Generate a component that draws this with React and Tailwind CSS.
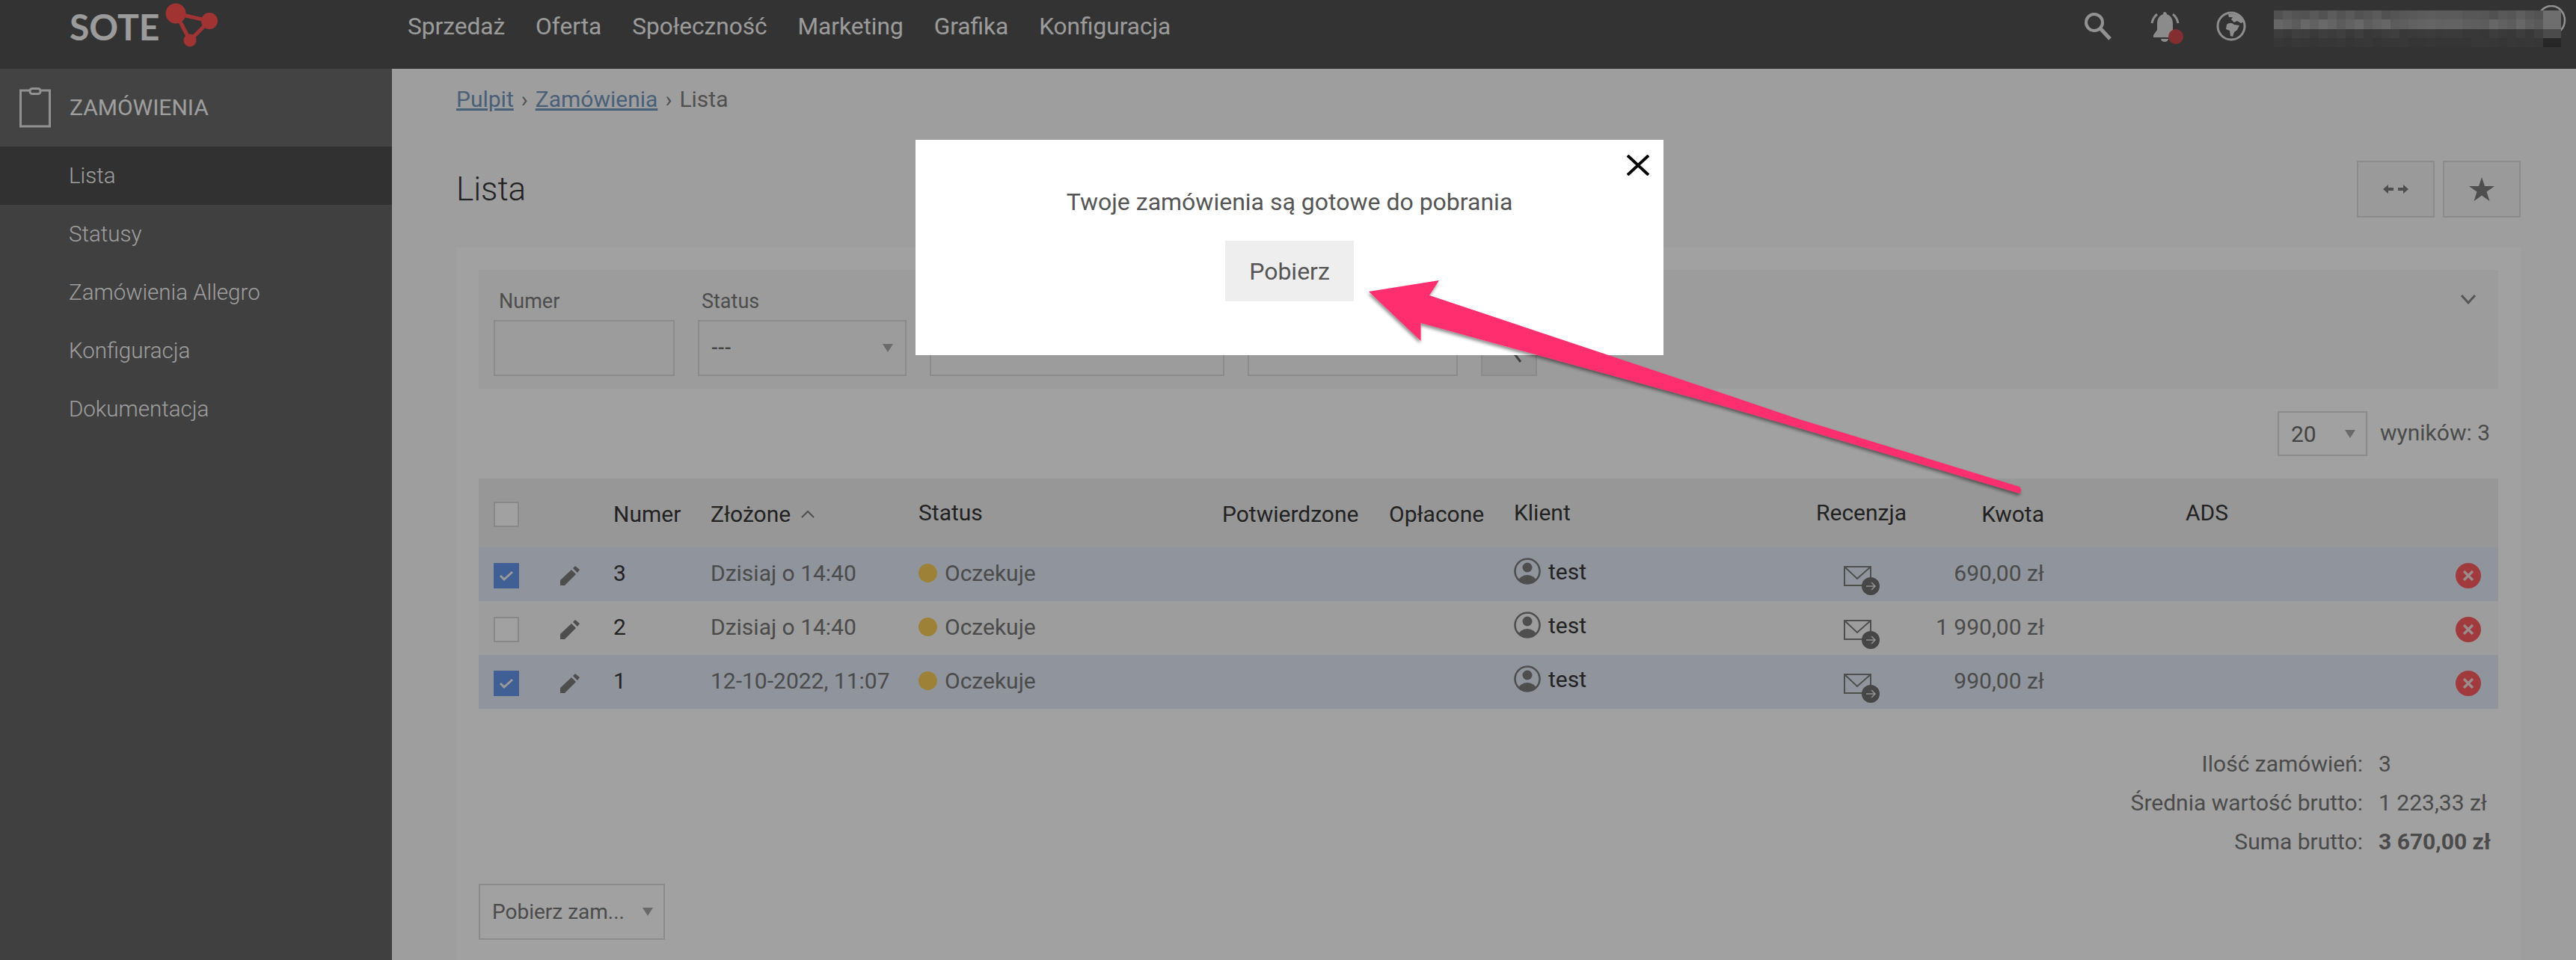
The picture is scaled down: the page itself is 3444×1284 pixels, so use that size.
import { Fragment } from "react";

const NAV = ["Sprzedaż", "Oferta", "Społeczność", "Marketing", "Grafika", "Konfiguracja"];
const MENU = ["Statusy", "Zamówienia Allegro", "Konfiguracja", "Dokumentacja"];
const ROWS = [
  { id: 3, date: "Dzisiaj o 14:40", amount: "690,00 zł", checked: true },
  { id: 2, date: "Dzisiaj o 14:40", amount: "1 990,00 zł", checked: false },
  { id: 1, date: "12-10-2022, 11:07", amount: "990,00 zł", checked: true },
];
const COLS = "grid grid-cols-[89px_71px_130px_278px_406px_223px_167px_404px_142px_163px_189px_1fr] items-center pl-5 pr-[23px]";

function Tri() {
  return (
    <svg width="14" height="11" viewBox="0 0 14 11" className="shrink-0">
      <path d="M0 0H14L7 11Z" fill="#a8a8a8" />
    </svg>
  );
}

function Logo() {
  return (
    <svg width="72" height="62" viewBox="0 0 72 62" className="ml-2 overflow-visible">
      <g fill="#ff5252">
        <path d="M15 13L60 23L34 49Z" fill="none" stroke="#ff5252" strokeWidth="5" />
        <circle cx="15" cy="13" r="13.5" />
        <circle cx="60" cy="23" r="11" />
        <circle cx="34" cy="49" r="8.5" />
      </g>
    </svg>
  );
}

function HeaderIcons() {
  return (
    <div className="ml-auto flex items-center gap-[44px] mt-[-2px]">
      <svg width="38" height="38" viewBox="0 0 38 38" fill="none" stroke="#e8e8e8" className="mr-[7px]">
        <circle cx="14" cy="14" r="11" strokeWidth="4" />
        <path d="M22 22L35 36" strokeWidth="5" />
      </svg>
      <svg width="44" height="44" viewBox="0 0 44 44" className="mt-[6px]">
        <path d="M19 0c2 0 3 2 3 3 6 2 8 7 8 13v8l5 7v3H4v-3l5-7v-8c0-6 2-11 8-13 0-1 0-3 2-3z" fill="#dcdcdc" />
        <path d="M14 36h10a5 4 0 0 1-10 0z" fill="#dcdcdc" />
        <path d="M9 3C5 6 3 10 2 15M30 3c4 3 6 7 7 12" fill="none" stroke="#dcdcdc" strokeWidth="3" />
        <circle cx="34" cy="33" r="10" fill="#d24a4f" />
      </svg>
      <svg width="40" height="40" viewBox="0 0 40 40" className="mr-[-7px]">
        <circle cx="20" cy="20" r="18" fill="none" stroke="#e0e0e0" strokeWidth="3" />
        <path d="M16 4C24 2 33 6 37 14L33 16L28 13L24 15L20 11L22 8L17 8ZM14 18C17 15 21 15 24 18L31 19L28 25L24 28L22 34L19 33L18 26L13 24Z" fill="#e0e0e0" />
      </svg>
      <Mosaic />
    </div>
  );
}

// pixelated e-mail address in the top bar
function Mosaic() {
  const rows = [
    { y: 7, base: 128, span: 22 },
    { y: 19, base: 142, span: 26 },
    { y: 32, base: 88, span: 14 },
    { y: 44, base: 84, span: 6 },
  ];
  return (
    <svg width="391" height="56" viewBox="0 0 391 56">
      <ellipse cx="371" cy="20" rx="18" ry="19" fill="none" stroke="#e8e8e8" strokeWidth="2.5" />
      {rows.map((r, ri) =>
        Array.from({ length: 32 }).map((_, i) => {
          const n = ((i * 37 + ri * 53 + (i * i * 11) % 23) % 29) / 29;
          const c = Math.round(r.base + n * r.span);
          const last = i >= 30;
          const v = last ? (ri < 2 ? 175 : ri === 2 ? 120 : 62) : c;
          return <rect key={`${ri}-${i}`} x={i * 12} y={r.y} width="12" height="13" fill={`rgb(${v},${v},${v})`} />;
        }),
      )}
    </svg>
  );
}

function Sidebar() {
  return (
    <aside className="w-[524px] shrink-0 bg-[#666666] text-[#fbfbfb]">
      <div className="h-[104px] flex items-center bg-[#6a6a6a] pl-[26px]">
        <svg width="42" height="54" viewBox="0 0 42 54" fill="none" stroke="#e6e6e6" strokeWidth="3">
          <rect x="1.5" y="4" width="39" height="48" />
          <rect x="14" y="1.5" width="14" height="7" rx="3" fill="#6a6a6a" />
        </svg>
        <span className="ml-[25px] text-[30px] leading-none">ZAMÓWIENIA</span>
      </div>
      <div className="h-[78px] flex items-center pl-[92px] bg-[#4f4f4f] text-[29.5px] font-light">Lista</div>
      {MENU.map((m) => (
        <div key={m} className="h-[78px] flex items-center pl-[92px] text-[29.5px] font-light">{m}</div>
      ))}
    </aside>
  );
}

function Box({ className = "", children }) {
  return <div className={`border-2 border-[#dcdcdc] h-[75px] flex items-center ${className}`}>{children}</div>;
}

function Filters() {
  return (
    <div className="h-[159px] bg-[#f8f8f8] flex pl-5 pr-[30px] pt-6">
      <div className="flex gap-[31px]">
        <div className="w-[242px]">
          <div className="h-[43px] pl-[7px] text-[27px] leading-9 text-[#7a7a7a]">Numer</div>
          <Box />
        </div>
        <div className="w-[279px]">
          <div className="h-[43px] pl-[5px] text-[27px] leading-9 text-[#7a7a7a]">Status</div>
          <Box className="justify-between pl-4 pr-4">
            <span className="text-[26px] font-medium text-[#707070]">---</span>
            <Tri />
          </Box>
        </div>
        <div className="w-[394px] pt-[43px]"><Box /></div>
        <div className="w-[281px] pt-[43px]"><Box /></div>
        <div className="w-[75px] pt-[43px]">
          <Box className="justify-center bg-[#eaeaea]">
            <svg width="38" height="40" viewBox="0 0 38 40" fill="none" stroke="#666666" strokeWidth="3">
              <circle cx="16" cy="16" r="11" />
              <path d="M24 25L34 38" />
            </svg>
          </Box>
        </div>
      </div>
      <svg width="20" height="13" viewBox="0 0 20 13" fill="none" stroke="#8a8a8a" strokeWidth="3" className="ml-auto mt-[9px]">
        <path d="M1 1L10 11L19 1" />
      </svg>
    </div>
  );
}

function Check({ checked }) {
  if (!checked) return <div className="w-[34px] h-[34px] border-2 border-[#d8d8d8] bg-[#ffffff]" />;
  return (
    <div className="w-[34px] h-[34px] bg-[#6697ea] flex items-center justify-center">
      <svg width="20" height="16" viewBox="0 0 20 16" fill="none" stroke="#f4f4f4" strokeWidth="3">
        <path d="M2 8L7 13L18 3" />
      </svg>
    </div>
  );
}

function Pencil() {
  return (
    <svg width="26" height="26" viewBox="0 0 26 26" fill="#7c7c7c" className="mt-[3px]">
      <path d="M0 26V19L15 5L21 11L6 26Z" />
      <path d="M17 3L20 0L26 5L23 9Z" />
    </svg>
  );
}

function UserIcon() {
  return (
    <svg width="36" height="36" viewBox="0 0 36 36" className="shrink-0">
      <clipPath id="usr"><circle cx="18" cy="18" r="17" /></clipPath>
      <circle cx="18" cy="13" r="6.5" fill="#7c7c7c" />
      <ellipse cx="18" cy="32" rx="12" ry="9" fill="#7c7c7c" clipPath="url(#usr)" />
      <circle cx="18" cy="18" r="16.5" fill="none" stroke="#7c7c7c" strokeWidth="2.5" />
    </svg>
  );
}

function MailIcon() {
  return (
    <svg width="50" height="40" viewBox="0 0 50 40" className="ml-[37px] mt-[16px]">
      <rect x="1" y="2" width="35" height="25" fill="none" stroke="#7c7c7c" strokeWidth="2" />
      <path d="M1 2L18 18L36 2" fill="none" stroke="#7c7c7c" strokeWidth="2" />
      <circle cx="36" cy="28" r="12" fill="#707070" />
      <path d="M30 28H42M37 23L42 28L37 33" fill="none" stroke="#e4e4e4" strokeWidth="1.5" />
    </svg>
  );
}

function DeleteIcon() {
  return (
    <svg width="34" height="34" viewBox="0 0 34 34" className="mt-[4px]">
      <circle cx="17" cy="17" r="17" fill="#ff5c60" />
      <path d="M11 11L23 23M23 11L11 23" stroke="#f6dcdc" strokeWidth="3.5" />
    </svg>
  );
}

function OrdersTable() {
  return (
    <div className="text-[30px] text-[#363636]">
      <div className={`${COLS} h-[92px] bg-[#f0f0f0]`}>
        <div className="mt-1"><Check checked={false} /></div>
        <div />
        <div className="mt-[2px]">Numer</div>
        <div className="mt-[2px] flex items-center gap-[14px]">
          Złożone
          <svg width="18" height="11" viewBox="0 0 18 11" fill="none" stroke="#7c7c7c" strokeWidth="2">
            <path d="M1 10L9 2L17 10" />
          </svg>
        </div>
        <div className="mb-[2px]">Status</div>
        <div className="mt-[2px]">Potwierdzone</div>
        <div className="mt-[2px]">Opłacone</div>
        <div className="mb-[2px]">Klient</div>
        <div className="mb-[2px]">Recenzja</div>
        <div className="mt-[2px] text-right">Kwota</div>
        <div />
        <div className="mb-[2px]">ADS</div>
      </div>
      {ROWS.map((r) => (
        <div key={r.id} className={`${COLS} h-[72px] ${r.checked ? "bg-[#e3ebf9]" : "bg-[#f9f9f9]"}`}>
          <div className="mt-1"><Check checked={r.checked} /></div>
          <Pencil />
          <div className="mb-1">{r.id}</div>
          <div className="mb-1 text-[#777777]">{r.date}</div>
          <div className="mb-1 flex items-center gap-[10px] text-[#777777]">
            <span className="w-[25px] h-[25px] rounded-full bg-[#f7cc58]" />
            Oczekuje
          </div>
          <div />
          <div />
          <div className="mb-[8px] flex items-center gap-[10px]">
            <UserIcon />
            test
          </div>
          <MailIcon />
          <div className="mb-1 text-right text-[#777777]">{r.amount}</div>
          <div />
          <div className="flex justify-end"><DeleteIcon /></div>
        </div>
      ))}
    </div>
  );
}

function Summary() {
  const lines = [
    ["Ilość zamówień:", "3", ""],
    ["Średnia wartość brutto:", "1 223,33 zł", ""],
    ["Suma brutto:", "3 670,00 zł", "font-bold"],
  ];
  return (
    <div className="mt-12 grid grid-cols-[1fr_160px] gap-x-[21px] text-[30px] leading-[52px] text-[#777777]">
      {lines.map(([label, value, cls]) => (
        <Fragment key={label}>
          <div className="text-right">{label}</div>
          <div className={cls}>{value}</div>
        </Fragment>
      ))}
    </div>
  );
}

function Arrow() {
  return (
    <svg width="3444" height="1284" viewBox="0 0 3444 1284" className="absolute inset-0 pointer-events-none">
      <defs>
        <filter id="sh" x="-5%" y="-5%" width="110%" height="115%">
          <feDropShadow dx="-1" dy="3" stdDeviation="2" floodColor="#000000" floodOpacity="0.45" />
        </filter>
      </defs>
      <path
        d="M1830 390L1924 375L1911 395L2300 525L2400 559L2700 651Q2704 655 2700 660L2400 571L2300 542L2056 475L1899.5 432V456Z"
        fill="#ff2e6e"
        filter="url(#sh)"
      />
    </svg>
  );
}

function Modal() {
  return (
    <div className="absolute left-[1224px] top-[187px] w-[1000px] h-[288px] bg-white flex flex-col items-center pt-[65px] text-[#555555]">
      <svg width="30" height="28" viewBox="0 0 30 28" stroke="#000000" strokeWidth="4" className="absolute right-[19px] top-[20px]">
        <path d="M1 1L29 27M29 1L1 27" />
      </svg>
      <div className="text-[32px] leading-9 mb-[34px]">Twoje zamówienia są gotowe do pobrania</div>
      <button className="w-[172px] h-[81px] bg-[#eeeeee] text-[32px] text-[#555555]">Pobierz</button>
    </div>
  );
}

export default function App() {
  return (
    <div className="relative w-[3444px] h-[1284px] overflow-hidden bg-[#fbfbfb] [font-family:Roboto,sans-serif]">
      <header className="h-[92px] bg-[#525252] flex items-center pb-5 pl-[93px] pr-[13px] text-[#f6f6f6]">
        <div className="w-[452px] shrink-0 flex items-center">
          <span className="w-[119px] text-[48px] leading-none font-bold [font-family:Lato,sans-serif]">SOTE</span>
          <Logo />
        </div>
        <nav className="flex gap-[41px] text-[31.6px]">
          {NAV.map((n) => (
            <span key={n}>{n}</span>
          ))}
        </nav>
        <HeaderIcons />
      </header>
      <div className="flex h-[1192px]">
        <Sidebar />
        <main className="flex-1 pl-[86px] pr-[74px]">
          <div className="pt-[23px] text-[30px] leading-9 text-[#808080] flex gap-[10px]">
            <span className="underline text-[#7597be]">Pulpit</span>
            <span>›</span>
            <span className="underline text-[#7597be]">Zamówienia</span>
            <span>›</span>
            <span>Lista</span>
          </div>
          <div className="mt-16 flex items-center h-[76px]">
            <h1 className="text-[44px] font-light text-[#363636]">Lista</h1>
            <div className="ml-auto flex gap-[11px]">
              <div className="w-[104px] h-[76px] border-2 border-[#dcdcdc] bg-[#f4f4f4] flex items-center justify-center">
                <svg width="34" height="14" viewBox="0 0 34 14" fill="#7c7c7c">
                  <path d="M0 7L7 1V5H14V9H7V13ZM34 7L27 1V5H20V9H27V13Z" />
                </svg>
              </div>
              <div className="w-[104px] h-[76px] border-2 border-[#dcdcdc] bg-[#f4f4f4] flex items-center justify-center">
                <svg width="34" height="32" viewBox="0 0 34 32" fill="#7c7c7c">
                  <path d="M17 0L21 12H34L23.5 19.5L27.5 32L17 24.5L6.5 32L10.5 19.5L0 12H13Z" />
                </svg>
              </div>
            </div>
          </div>
          <section className="mt-10 h-[953px] bg-white px-[30px] pt-[30px]">
            <Filters />
            <div className="mt-[30px] h-[60px] flex items-center justify-end gap-[17px] pr-[11px] text-[30px] text-[#777777]">
              <div className="w-[120px] h-[60px] border-2 border-[#dcdcdc] flex items-center justify-between pl-4 pr-[14px] text-[#6a6a6a]">
                20
                <Tri />
              </div>
              <span className="mb-1">wyników: 3</span>
            </div>
            <div className="mt-[30px]"><OrdersTable /></div>
            <Summary />
            <div className="mt-[30px] w-[249px] h-[75px] border-2 border-[#dcdcdc] flex items-center justify-between pl-4 pr-[14px] text-[28px] text-[#777777]">
              Pobierz zam...
              <Tri />
            </div>
          </section>
        </main>
      </div>
      <div className="absolute inset-0 bg-black/[0.37]" />
      <Modal />
      <Arrow />
    </div>
  );
}
